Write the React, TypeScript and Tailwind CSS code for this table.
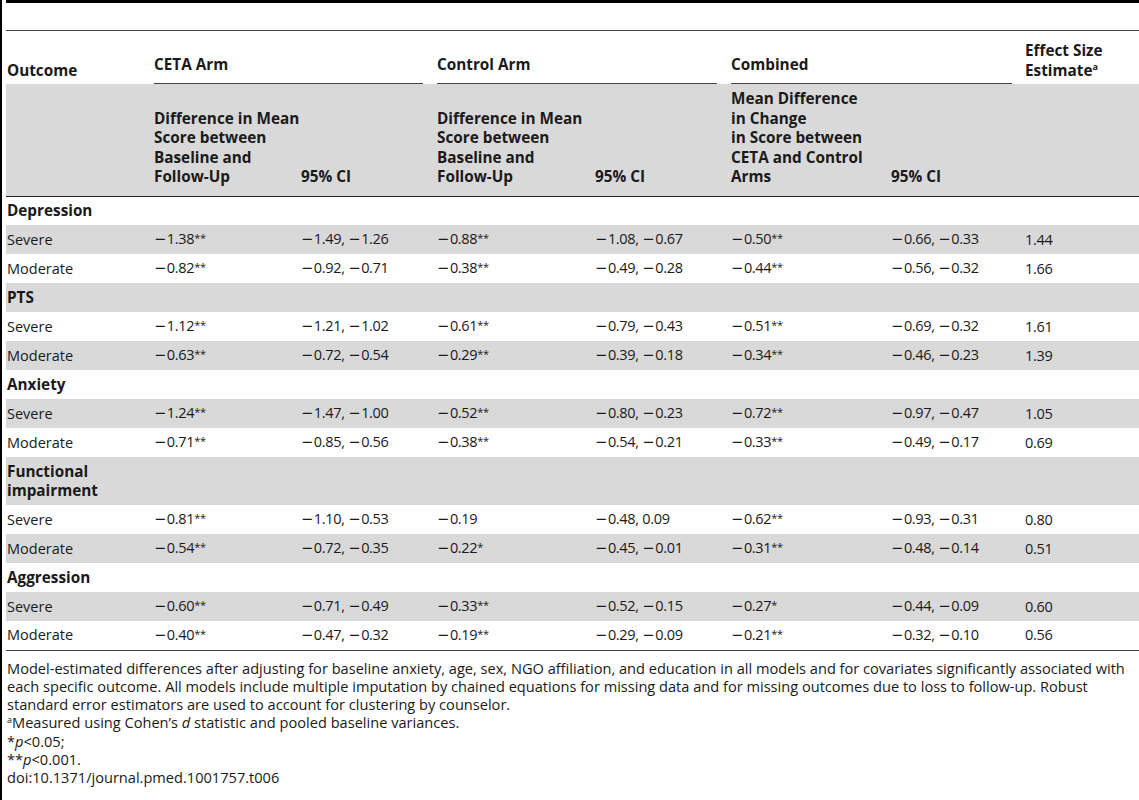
import React from "react";

type Row = { label: string; bold?: boolean; cells?: string[]; double?: boolean };

const rows: Row[] = [
  { label: "Depression", bold: true },
  { label: "Severe", cells: ["−1.38**", "−1.49, −1.26", "−0.88**", "−1.08, −0.67", "−0.50**", "−0.66, −0.33", "1.44"] },
  { label: "Moderate", cells: ["−0.82**", "−0.92, −0.71", "−0.38**", "−0.49, −0.28", "−0.44**", "−0.56, −0.32", "1.66"] },
  { label: "PTS", bold: true },
  { label: "Severe", cells: ["−1.12**", "−1.21, −1.02", "−0.61**", "−0.79, −0.43", "−0.51**", "−0.69, −0.32", "1.61"] },
  { label: "Moderate", cells: ["−0.63**", "−0.72, −0.54", "−0.29**", "−0.39, −0.18", "−0.34**", "−0.46, −0.23", "1.39"] },
  { label: "Anxiety", bold: true },
  { label: "Severe", cells: ["−1.24**", "−1.47, −1.00", "−0.52**", "−0.80, −0.23", "−0.72**", "−0.97, −0.47", "1.05"] },
  { label: "Moderate", cells: ["−0.71**", "−0.85, −0.56", "−0.38**", "−0.54, −0.21", "−0.33**", "−0.49, −0.17", "0.69"] },
  { label: "Functional impairment", bold: true, double: true },
  { label: "Severe", cells: ["−0.81**", "−1.10, −0.53", "−0.19", "−0.48, 0.09", "−0.62**", "−0.93, −0.31", "0.80"] },
  { label: "Moderate", cells: ["−0.54**", "−0.72, −0.35", "−0.22*", "−0.45, −0.01", "−0.31**", "−0.48, −0.14", "0.51"] },
  { label: "Aggression", bold: true },
  { label: "Severe", cells: ["−0.60**", "−0.71, −0.49", "−0.33**", "−0.52, −0.15", "−0.27*", "−0.44, −0.09", "0.60"] },
  { label: "Moderate", cells: ["−0.40**", "−0.47, −0.32", "−0.19**", "−0.29, −0.09", "−0.21**", "−0.32, −0.10", "0.56"] },
];

function Value({ text }: { text: string }) {
  const parts: React.ReactNode[] = [];
  let buf = "";
  const flush = (k: string) => {
    if (buf) {
      parts.push(<span key={k}>{buf}</span>);
      buf = "";
    }
  };
  for (let i = 0; i < text.length; i++) {
    const ch = text[i];
    if (ch === "−") {
      flush("b" + i);
      parts.push(
        <span key={"m" + i} className="mr-[1px]" style={{ fontFamily: '"DejaVu Sans", sans-serif' }}>
          −
        </span>
      );
    } else if (ch === "*") {
      flush("b" + i);
      let stars = "";
      while (text[i] === "*") {
        stars += "*";
        i++;
      }
      i--;
      parts.push(
        <span key={"s" + i} className="text-[11px] align-[2px] leading-none">
          {stars}
        </span>
      );
    } else {
      buf += ch;
    }
  }
  flush("end");
  return <span className="tracking-[-0.3px]">{parts}</span>;
}

export default function App() {
  return (
    <div
      className="w-[1139px] h-[800px] bg-white text-[#1a1a1a] border-l-2 border-black pl-[4px] overflow-hidden"
      style={{ fontFamily: '"Open Sans", "Noto Sans", sans-serif' }}
    >
      <div className="border-t-[3px] border-black h-[31px] border-b border-b-[#444]" />
      <table className="table-fixed border-collapse w-[1133px] text-[14.5px]">
        <colgroup>
          <col className="w-[148px]" />
          <col className="w-[147px]" />
          <col className="w-[136px]" />
          <col className="w-[158px]" />
          <col className="w-[136px]" />
          <col className="w-[160px]" />
          <col className="w-[134px]" />
          <col className="w-[114px]" />
        </colgroup>
        <thead className="font-bold text-[15.3px]">
          <tr className="h-[53px] align-bottom">
            <td className="pl-[1px] pb-[4px] leading-[20px]">Outcome</td>
            <td colSpan={2} className="p-0">
              <div className="mr-[14px] border-b border-[#444] pb-[9px] leading-[20px]">CETA Arm</div>
            </td>
            <td colSpan={2} className="p-0">
              <div className="mr-[14px] border-b border-[#444] pb-[9px] leading-[20px]">Control Arm</div>
            </td>
            <td colSpan={2} className="p-0">
              <div className="mr-[13px] border-b border-[#444] pb-[9px] leading-[20px]">Combined</div>
            </td>
            <td className="pb-[4px] leading-[20px] whitespace-nowrap">
              Effect Size
              <br />
              Estimate<span className="text-[9px] relative -top-[6px] leading-none">a</span>
            </td>
          </tr>
          <tr className="h-[112px] align-bottom bg-[#d9d9d9] border-b border-[#222] leading-[19.5px]">
            <td />
            <td className="pb-[9px] whitespace-nowrap">
              Difference in Mean
              <br />
              Score between
              <br />
              Baseline and
              <br />
              Follow-Up
            </td>
            <td className="pb-[9px]">95% CI</td>
            <td className="pb-[9px] whitespace-nowrap">
              Difference in Mean
              <br />
              Score between
              <br />
              Baseline and
              <br />
              Follow-Up
            </td>
            <td className="pb-[9px]">95% CI</td>
            <td className="pb-[9px] whitespace-nowrap">
              Mean Difference
              <br />
              in Change
              <br />
              in Score between
              <br />
              CETA and Control
              <br />
              Arms
            </td>
            <td className="pb-[9px]">95% CI</td>
            <td />
          </tr>
        </thead>
        <tbody>
          {rows.map((r, i) => (
            <tr
              key={i}
              className={`${r.double ? "h-[48px] leading-[19.5px]" : "h-[29px]"} ${i % 2 === 1 ? "bg-[#d9d9d9]" : "bg-white"} ${i === rows.length - 1 ? "border-b border-[#444]" : ""}`}
            >
              {r.bold ? (
                <td colSpan={8} className="pl-[1px] font-bold text-[15.3px] align-middle">
                  {r.double ? (
                    <>
                      Functional
                      <br />
                      impairment
                    </>
                  ) : (
                    r.label
                  )}
                </td>
              ) : (
                <>
                  <td className="pl-[1px] align-middle">{r.label}</td>
                  {r.cells!.map((c, j) => (
                    <td key={j} className="align-middle whitespace-nowrap">
                      <Value text={c} />
                    </td>
                  ))}
                </>
              )}
            </tr>
          ))}
        </tbody>
      </table>
      <div className="pt-[8px] pl-[1px] text-[14.6px] leading-[18.3px] whitespace-nowrap">
        <p>
          Model-estimated differences after adjusting for baseline anxiety, age, sex, NGO affiliation, and education in all models and for covariates significantly associated with
          <br />
          each specific outcome. All models include multiple imputation by chained equations for missing data and for missing outcomes due to loss to follow-up. Robust
          <br />
          standard error estimators are used to account for clustering by counselor.
        </p>
        <p>
          <span className="text-[9px] relative -top-[5px] leading-none">a</span>Measured using Cohen’s <i>d</i> statistic and pooled baseline variances.
        </p>
        <p>
          *<i>p</i>&lt;0.05;
        </p>
        <p>
          **<i>p</i>&lt;0.001.
        </p>
        <p>doi:10.1371/journal.pmed.1001757.t006</p>
      </div>
    </div>
  );
}
